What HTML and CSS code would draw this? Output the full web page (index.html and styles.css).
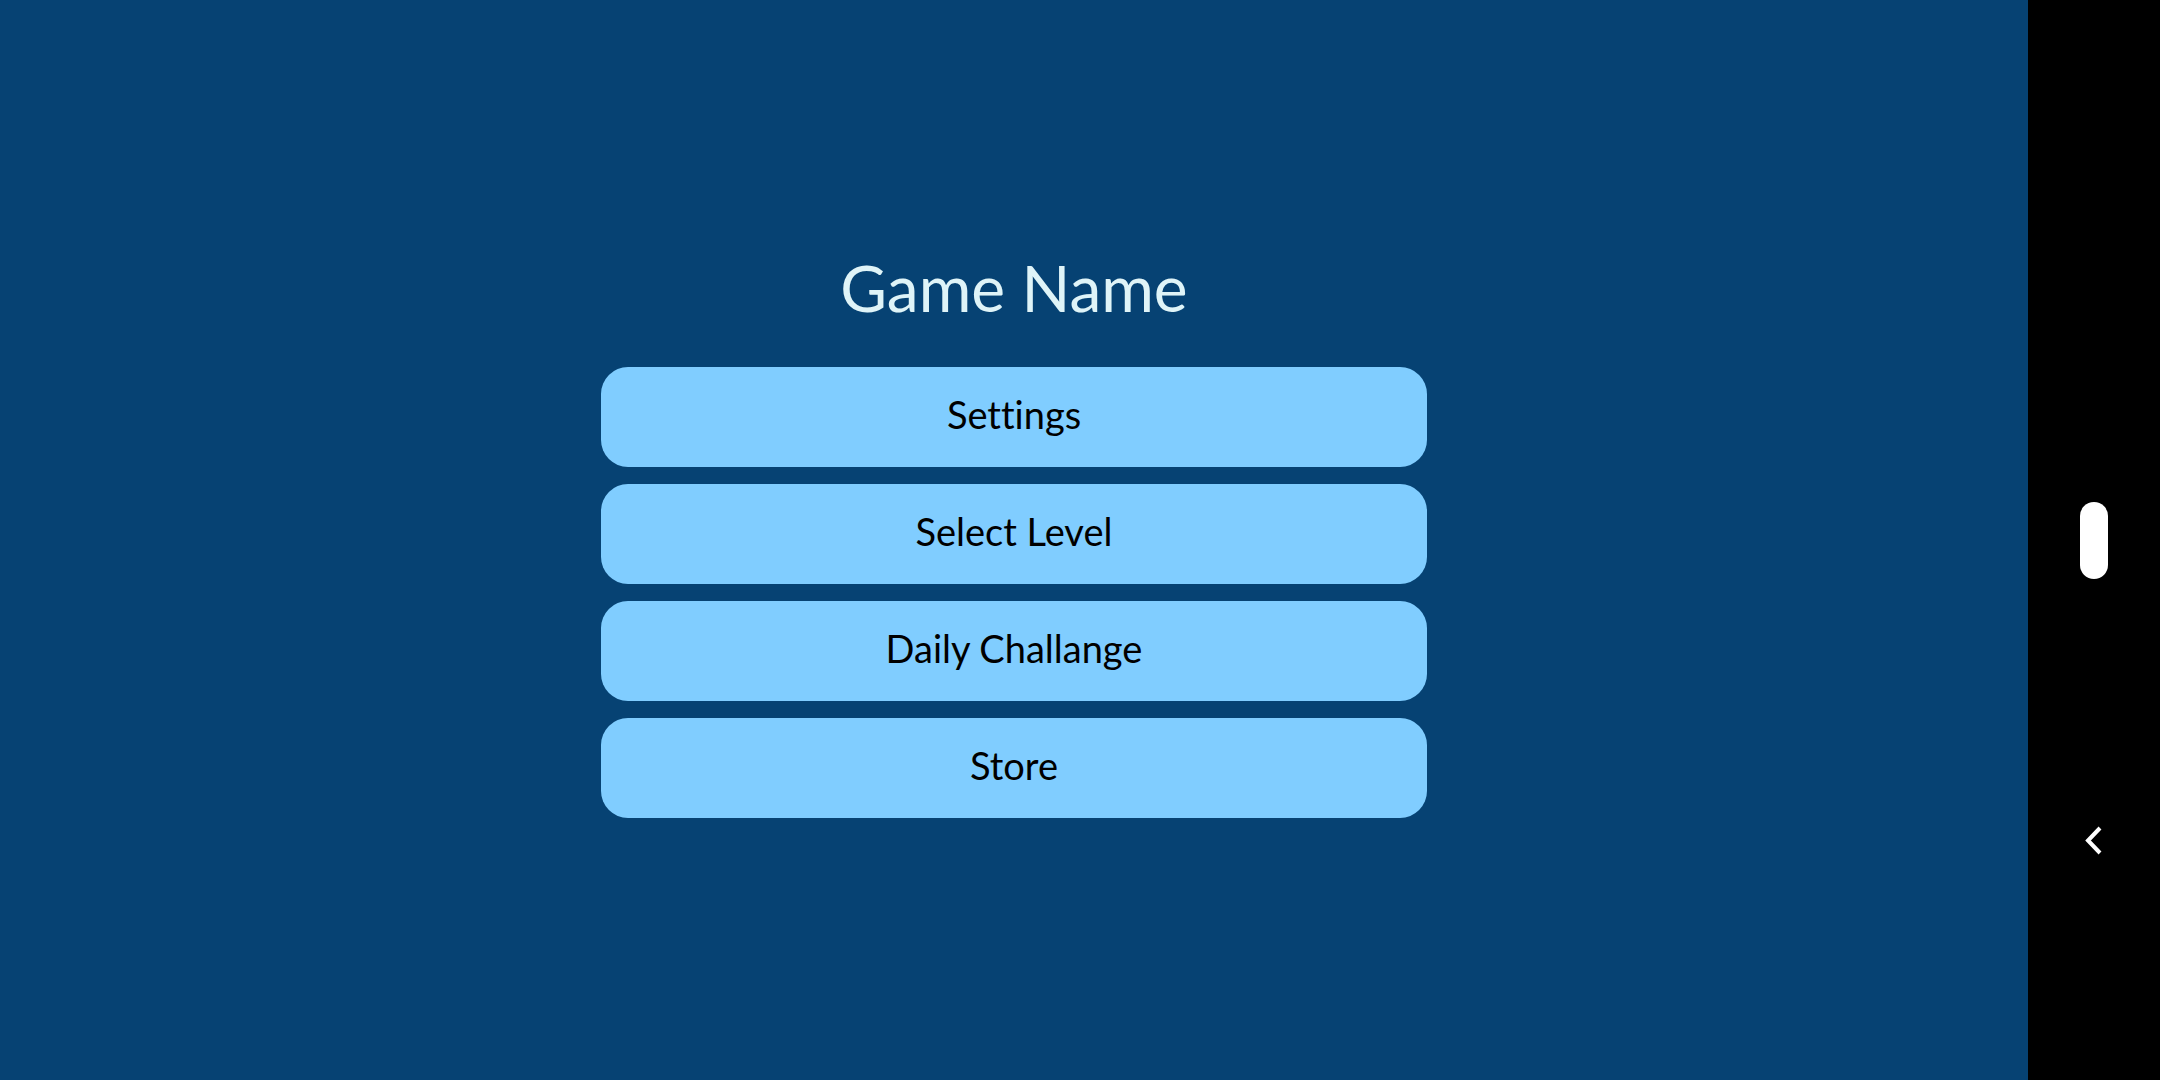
FILE: index.html
```html
<!DOCTYPE html>
<html lang="en">
<head>
<meta charset="UTF-8">
<meta name="viewport" content="width=device-width, initial-scale=1.0">
<title>Game Name</title>
<link rel="stylesheet" href="styles.css">
</head>
<body>

<main class="screen">
    <div class="menu">
        <h1>Game Name</h1>
        <button type="button">Settings</button>
        <button type="button">Select Level</button>
        <button type="button">Daily Challange</button>
        <button type="button">Store</button>
    </div>
</main>

<nav class="system-bar">
    <button type="button" class="home" aria-label="Home"></button>
    <button type="button" class="back" aria-label="Back">
        <svg width="20" height="32" viewBox="0 0 20 32" fill="none" stroke="#fff" stroke-width="4">
            <path d="M16 4 L4 16.5 L16 29"/>
        </svg>
    </button>
</nav>

</body>
</html>
```
FILE: styles.css
```css
* {
    box-sizing: border-box;
}
body {
    display: flex;
    min-height: 100vh;
    margin: 0;
    font-family: Lato, sans-serif;
    font-variant-ligatures: none;
    background-color: #064273;
}
button {
    padding: 0;
    border: none;
    font-family: inherit;
    font-variant-ligatures: none;
    cursor: pointer;
}
.screen {
    flex: 1;
    display: flex;
    align-items: center;
    justify-content: center;
}
.menu {
    display: flex;
    flex-direction: column;
    gap: 17px;
    width: 40.7%;
}
h1 {
    margin: 0 0 36px;
    font-size: 64px;
    line-height: 52px;
    font-weight: normal;
    text-align: center;
    color: #dff4f8;
}
.menu button {
    padding: 23px 20px 29px;
    border-radius: 27px;
    background-color: #80cdff;
    color: #000;
    font-size: 38px;
    line-height: 48px;
}
.system-bar {
    display: grid;
    grid-template-rows: 1fr 77px 1fr;
    justify-items: center;
    width: 132px;
    background-color: #000;
}
.home {
    grid-row: 2;
    width: 28px;
    border-radius: 14px;
    background-color: #fff;
}
.back {
    grid-row: 3;
    align-self: center;
    height: 32px;
    margin-top: 22px;
    background: none;
}
.back svg {
    display: block;
}
```
